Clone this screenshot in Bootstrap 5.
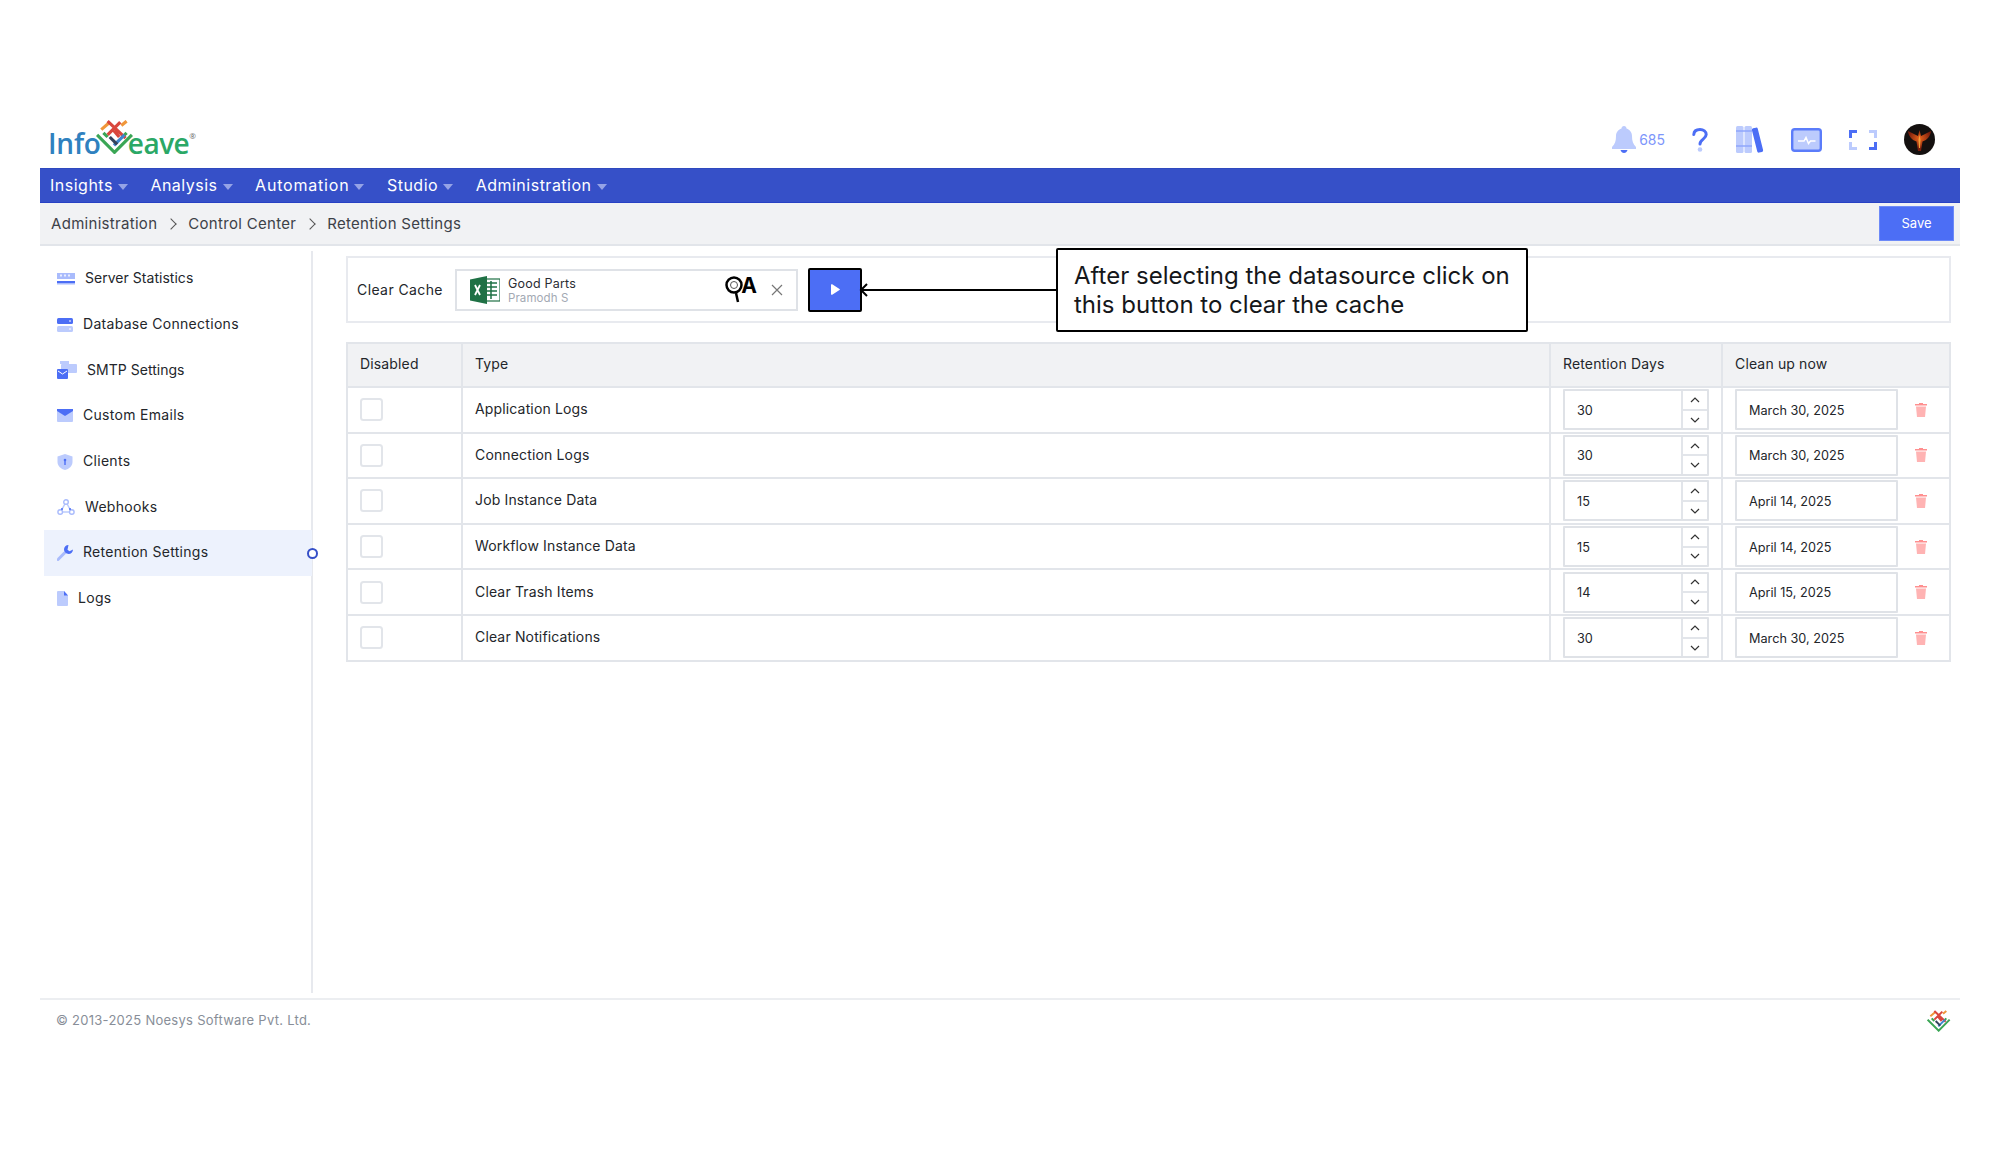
<!DOCTYPE html>
<html lang="en">
<head>
<meta charset="utf-8">
<title>Retention Settings</title>
<link href="https://cdn.jsdelivr.net/npm/bootstrap@5.3.0/dist/css/bootstrap.min.css" rel="stylesheet">
<style>
:root{--iw-blue:#4c6ef5;--iw-light:#bccbfd;--iw-line:#e2e5ea;--iw-head:#f1f2f4;}
body{font-family:Inter,"Liberation Sans",sans-serif;font-size:14px;color:#23262b;background:#fff;}
.page-wrap{padding:120px 40px 0;}
.brand-row{height:48px;}
.logo-box{padding:0 0 2px 8px;height:48px;}
.logo-text{font-family:"Open Sans",sans-serif;font-size:28px;font-weight:600;line-height:1;letter-spacing:-.2px;}
.logo-info{color:#2f81bf;}
.logo-eave{color:#2ba866;letter-spacing:-.5px;}
.logo-weave{width:38px;height:34px;margin:-12px -6px 0 -5px;}
.logo-reg{font-size:8px;color:#666;align-self:flex-start;margin-top:12px;font-weight:400;}
.top-tools{gap:27px;padding-right:25px;margin-bottom:9px;}
.tool-q{margin-right:1px;}
.bell-count{color:#7d96fb;font-size:14px;margin-left:3px;}
.avatar-mark{width:31px;height:31px;}
.main-nav{background:#3650c8;border-top:1px solid #2f49bf;border-bottom:1px solid #2741c4;height:35px;padding-left:10px;gap:22.5px;}
.main-nav .nav-link{color:#fff;font-size:16px;letter-spacing:.5px;padding:0 0 2px;}
.main-nav .nav-link.nav-wide{letter-spacing:.8px;}
.main-nav .dropdown-toggle::after{border-top-color:#95a3e6;border-width:6px 5px 0;margin-left:5px;vertical-align:1px;}
.crumb-bar{background:var(--iw-head);border-bottom:2px solid var(--iw-line);height:43px;padding:0 6px 0 11px;}
.crumb-bar .breadcrumb{margin:1px 0 0;font-size:15px;letter-spacing:.3px;}
.crumb-bar .breadcrumb-item,.crumb-bar .breadcrumb-item.active{color:#3d4148;}
.crumb-bar .breadcrumb-item+.breadcrumb-item{padding-left:0;}
.crumb-bar .breadcrumb-item+.breadcrumb-item::before{content:"";float:none;display:inline-block;width:8px;height:8px;padding:0;border-top:1px solid #555;border-right:1px solid #555;transform:rotate(45deg);margin:0 13px 1px 10px;}
.save-btn{background:var(--iw-blue);border:1px solid #6d8af8;border-radius:0;color:#fff;font-size:13px;width:75px;height:35px;padding:0;}
.body-row{height:752px;}
.side-col{width:273px;flex:none;margin-top:5px;height:742px;border-right:2px solid #e7e9ee;padding:5px 0 0 4px;}
.side-item{height:45.7px;padding:0 0 2px 13px;gap:10px;font-size:14px;letter-spacing:.3px;color:#23262b;position:relative;}
.side-item.side-tight{letter-spacing:.03px;}
.side-item svg{margin-top:2px;}
.side-item.current{background:#edf2fd;margin-right:-1px;}
.side-dot{position:absolute;right:-6px;top:18px;width:11px;height:11px;border:2px solid #3650c8;border-radius:50%;background:#fff;}
.content-col{padding:10px 10px 0 33px;}
.cache-card{height:67px;border:2px solid #e8eaef;border-radius:0;padding:0 0 0 9px;gap:10px;position:relative;}
.cache-label{font-size:14px;letter-spacing:.4px;color:#23262b;width:89px;white-space:nowrap;}
.source-box{width:343px;height:42px;border:2px solid #dfe2e7;padding:0 13px 0 13px;margin-left:-1px;}
.source-name{font-size:12.5px;line-height:14px;color:#2a2d33;margin-top:3px;letter-spacing:.2px;}
.source-owner{font-size:11.5px;line-height:14px;color:#a3a9b3;letter-spacing:.1px;}
.qa-mark{margin-right:14px;}
.qa-letter{font-size:21px;line-height:1;color:#000;margin-left:-2px;margin-top:-8px;}
.run-btn{width:54px;height:44px;border:2px solid #000;border-radius:2px;background:var(--iw-blue);padding:0;}
.run-btn:hover{background:var(--iw-blue);}
.note-box{position:absolute;right:421px;top:-10px;width:472px;height:84px;border:2px solid #000;border-radius:2px;background:#fff;font-size:24px;line-height:29px;color:#15171a;padding:11px 0 0 16px;white-space:nowrap;}
.note-line{position:absolute;left:-199px;top:33px;width:199px;height:14px;}
.rule-table{width:1603px;table-layout:fixed;margin:19px 0 0;border:2px solid var(--iw-line);border-collapse:collapse;}
.rule-table th,.rule-table td{border:2px solid var(--iw-line);padding:0 12px;vertical-align:middle;height:45.6px;font-size:14px;font-weight:400;color:#23262b;letter-spacing:.15px;}
.rule-table thead th{background:var(--iw-head);height:44px;padding-bottom:4px;}
.rule-table td.type-cell{padding-bottom:2px;}
.check-box{width:23px;height:23px;border:2px solid #e2e5ea;border-radius:2px;margin:0;display:block;}
.num-box{width:146px;height:41px;border:2px solid #dfe2e7;border-radius:1px;}
.num-box .form-control,.date-field{border:0;border-radius:0;font-size:12.7px;color:#23262b;box-shadow:none;height:100%;padding:1px 0 0 12px;background:transparent;}
.spin-col{width:26px;flex:none;border-left:2px solid #e2e5ea;}
.spin-part{flex:1;}
.spin-part+.spin-part{border-top:2px solid #e2e5ea;}
.date-box{width:163px;height:41px;border:2px solid #dfe2e7;border-radius:1px;}
.trash-mark{margin-left:17px;}
.foot-bar{border-top:2px solid #eceef1;height:44px;padding:0 9px 0 16px;color:#888e98;font-size:13px;letter-spacing:.27px;}
</style>
</head>
<body>
<svg width="0" height="0" class="position-absolute">
  <symbol id="weave" viewBox="0 0 36 32">
    <g fill="none" stroke-width="3" stroke-linecap="butt">
      <path d="M1 14 17.500 30.500 34 14" stroke="#3aa655"/>
      <path d="M7 12l4 4M29 12l-4 4" stroke="#3aa655"/>
      <path d="M5 9l8-7M24 5l5-4" stroke="#f0973a"/>
      <path d="M11 1l17 16M17 10l5 6M23 2 11 14" stroke="#d9473d"/>
      <path d="M17 24l10-10" stroke="#3f86cf"/>
      <path d="M13 16l7 7" stroke="#33435c"/>
    </g>
  </symbol>
</svg>
<div class="page-wrap">
  <header class="brand-row d-flex align-items-center justify-content-between">
    <div class="logo-box d-flex align-items-center logo-text">
      <span class="logo-info">Info</span>
      <svg class="logo-weave" aria-hidden="true"><use href="#weave"/></svg>
      <span class="logo-eave">eave</span>
      <span class="logo-reg">®</span>
    </div>
    <div class="top-tools d-flex align-items-center">
      <div class="d-flex align-items-center">
        <svg width="24" height="27" viewBox="0 0 24 27"><path fill="#bccbfd" d="M12 0c1.500 0 2.500 1 2.500 2.400C18 3.500 20 6.500 20 10c0 5 1 8 4 11v2H0v-2c3-3 4-6 4-11 0-3.500 2-6.500 5.500-7.600C9.500 1 10.500 0 12 0z"/><path fill="#4c6ef5" d="M8.500 24h7c-.5 2-2 3-3.500 3s-3-1-3.500-3z"/></svg>
        <span class="bell-count">685</span>
      </div>
      <svg class="tool-q" width="16" height="24" viewBox="0 0 16 24"><path fill="none" stroke="#4c6ef5" stroke-width="3" stroke-linecap="round" d="M1.800 6.500C2 3.500 4.500 1.600 8 1.600c3.500 0 6.200 2 6.200 5 0 4.500-6.200 4.500-6.200 9.400"/><circle cx="8" cy="21.500" r="2.300" fill="#bccbfd"/></svg>
      <svg width="28" height="28" viewBox="0 0 28 28"><rect x="0" y="0" width="7.500" height="27" rx="1.500" fill="#bccbfd"/><rect x="8.500" y="0" width="7.500" height="27" rx="1.500" fill="#bccbfd"/><path d="M0 5h16M0 20h16" stroke="#8ea6fb" stroke-width="1.500"/><g transform="rotate(-14 22 14)"><rect x="18.500" y="1.500" width="6" height="25" rx="1.500" fill="#4c6ef5"/></g></svg>
      <svg width="31" height="24" viewBox="0 0 31 24"><rect x="1.200" y="1.200" width="28.600" height="21.600" rx="2.500" fill="#bccbfd" stroke="#5b7cfa" stroke-width="2.400"/><path d="M7 13h6l2-3.500 2.500 6 2-2.500h5" fill="none" stroke="#fff" stroke-width="1.500"/></svg>
      <svg width="28" height="20" viewBox="0 0 28 20"><path fill="none" stroke="#4c6ef5" stroke-width="3" d="M1.500 8V1.500H8M26.500 12v6.500H20"/><path fill="none" stroke="#bccbfd" stroke-width="3" d="M20 1.500h6.500V8M8 18.500H1.500V12"/></svg>
      <svg class="avatar-mark" viewBox="0 0 31 31"><defs><clipPath id="avatarClip"><circle cx="15.500" cy="15.500" r="15.500"/></clipPath><radialGradient id="avatarGlow" cx=".5" cy=".4" r=".5"><stop offset="0" stop-color="#e8641c"/><stop offset="1" stop-color="#7a1d0c"/></radialGradient></defs><circle cx="15.500" cy="15.500" r="15.500" fill="#14100f"/><g clip-path="url(#avatarClip)"><path fill="url(#avatarGlow)" d="M15.500 6l-1.500 6-10-5c.5 5 3.500 9 8.500 10.500L14 27h3l1.500-9.500C23.500 16 26.500 12 27 7l-10 5z"/><path fill="#f2a13a" d="M15.500 10.500 14.500 16l.5 8h1l.5-8z"/></g></svg>
    </div>
  </header>

  <nav class="nav main-nav align-items-center">
    <a class="nav-link dropdown-toggle" href="#">Insights</a>
    <a class="nav-link dropdown-toggle" href="#">Analysis</a>
    <a class="nav-link nav-wide dropdown-toggle" href="#">Automation</a>
    <a class="nav-link dropdown-toggle" href="#">Studio</a>
    <a class="nav-link dropdown-toggle" href="#">Administration</a>
  </nav>

  <div class="crumb-bar d-flex align-items-center justify-content-between">
    <ol class="breadcrumb">
      <li class="breadcrumb-item">Administration</li>
      <li class="breadcrumb-item">Control Center</li>
      <li class="breadcrumb-item active">Retention Settings</li>
    </ol>
    <button class="btn save-btn" type="button">Save</button>
  </div>

  <div class="body-row d-flex">
    <aside class="side-col">
      <div class="side-item side-tight d-flex align-items-center">
        <svg width="18" height="12" viewBox="0 0 18 12"><rect y="0" width="18" height="6" fill="#a9bbfc"/><path d="M4 1.500v2M8 1.500v2M12 1.500v2" stroke="#fff" stroke-width="1.500"/><path d="M0 8h18v2H0z" fill="#4c6ef5"/><path d="M0 10h18v1.500H0z" fill="#a9bbfc"/></svg>
        <span>Server Statistics</span>
      </div>
      <div class="side-item d-flex align-items-center">
        <svg width="16" height="14" viewBox="0 0 16 14"><rect width="16" height="6" rx="1.500" fill="#4c6ef5"/><rect y="8" width="16" height="6" rx="1.500" fill="#bccbfd"/><path d="M12 3h2M12 11h2" stroke="#fff"/></svg>
        <span>Database Connections</span>
      </div>
      <div class="side-item side-tight d-flex align-items-center">
        <svg width="20" height="18" viewBox="0 0 20 18"><path d="M3 3V0h9v3z" fill="#bccbfd"/><rect x="4" y="3" width="16" height="9" rx="1" fill="#bccbfd"/><rect x="0" y="8" width="11" height="10" rx="1" fill="#4c6ef5"/><path d="M1 10l4.500 3L10 10" fill="none" stroke="#fff"/></svg>
        <span>SMTP Settings</span>
      </div>
      <div class="side-item d-flex align-items-center">
        <svg width="16" height="13" viewBox="0 0 16 13"><rect width="16" height="13" rx="1" fill="#bccbfd"/><path d="M0 0h16v2L8 7 0 2z" fill="#4c6ef5"/></svg>
        <span>Custom Emails</span>
      </div>
      <div class="side-item d-flex align-items-center">
        <svg width="16" height="16" viewBox="0 0 16 16"><path d="M8 0l7.500 2.500V8c0 4-3.500 7-7.500 8-4-1-7.500-4-7.500-8V2.500z" fill="#bccbfd"/><path d="M8 6v5" stroke="#4c6ef5" stroke-width="1.400"/><circle cx="8" cy="6" r="1.300" fill="#4c6ef5"/></svg>
        <span>Clients</span>
      </div>
      <div class="side-item d-flex align-items-center">
        <svg width="18" height="16" viewBox="0 0 18 16"><path d="M9 3 3.500 13h11z" fill="none" stroke="#bccbfd" stroke-width="1.500"/><circle cx="9" cy="3" r="2.300" fill="#fff" stroke="#a9bbfc" stroke-width="1.400"/><circle cx="3.200" cy="13" r="2.300" fill="#fff" stroke="#a9bbfc" stroke-width="1.400"/><circle cx="14.800" cy="13" r="2.300" fill="#fff" stroke="#a9bbfc" stroke-width="1.400"/><circle cx="5" cy="10" r="1" fill="#4c6ef5"/><circle cx="13" cy="10" r="1" fill="#4c6ef5"/></svg>
        <span>Webhooks</span>
      </div>
      <div class="side-item current d-flex align-items-center">
        <svg width="16" height="16" viewBox="0 0 16 16"><path d="M7.500 8 1 14.500" stroke="#a9bbfc" stroke-width="3" stroke-linecap="round"/><path d="M11.500 0c-2.500 0-4.500 2-4.500 4.300 0 2.700 2.300 4.700 4.700 4.700C14 9 16 7 16 4.500l-3.500 1.700-2-1.500L11.500 0z" fill="#4c6ef5"/></svg>
        <span>Retention Settings</span>
        <span class="side-dot"></span>
      </div>
      <div class="side-item d-flex align-items-center">
        <svg width="11" height="15" viewBox="0 0 11 15"><path d="M1 0h6l4 4.500V14a1 1 0 0 1-1 1H1a1 1 0 0 1-1-1V1a1 1 0 0 1 1-1z" fill="#bccbfd"/><path d="M7 0l4 4.500H7z" fill="#4c6ef5"/></svg>
        <span>Logs</span>
      </div>
    </aside>

    <main class="content-col flex-grow-1">
      <section class="cache-card d-flex align-items-center">
        <span class="cache-label">Clear Cache</span>
        <div class="source-box d-flex align-items-center">
          <svg width="30" height="28" viewBox="0 0 30 28"><rect x="12" y="3" width="18" height="22" fill="#fff" stroke="#1f7145" stroke-width="1.200"/><path d="M15 7h12M15 11h12M15 15h12M15 19h12M21 5v18" stroke="#1f7145" stroke-width="1.500"/><path d="M0 3.500 17 0v28L0 24.500z" fill="#1f7145"/><path d="M5 9l5 10M10 9 5 19" stroke="#fff" stroke-width="1.800"/></svg>
          <div class="ms-2 flex-grow-1">
            <div class="source-name">Good Parts</div>
            <div class="source-owner">Pramodh S</div>
          </div>
          <div class="d-flex align-items-center qa-mark">
            <svg width="18" height="29" viewBox="0 0 18 29"><circle cx="9" cy="10" r="7.500" fill="#fff" stroke="#000" stroke-width="2.500"/><circle cx="9" cy="10" r="3.500" fill="none" stroke="#555"/><path d="M11 18l2 9" stroke="#000" stroke-width="2.500"/></svg>
            <span class="fw-bold qa-letter">A</span>
          </div>
          <svg width="12" height="12" viewBox="0 0 12 12"><path d="M1 1l10 10M11 1 1 11" stroke="#777" stroke-width="1.200"/></svg>
        </div>
        <button class="btn run-btn d-flex align-items-center justify-content-center" type="button" aria-label="Run">
          <svg width="9" height="11" viewBox="0 0 9 11"><path d="M0 1v9a.800.800 0 0 0 1.200.7L8.500 6a.6.600 0 0 0 0-1L1.200.300A.800.800 0 0 0 0 1z" fill="#fff"/></svg>
        </button>
        <div class="note-box">
          <svg class="note-line" viewBox="0 0 199 14"><path d="M199 7H2M8 1 2 7l6 6" fill="none" stroke="#000" stroke-width="2"/></svg>
          After selecting the datasource click on<br>this button to clear the cache
        </div>
      </section>

      <table class="rule-table">
        <colgroup><col style="width:115px"><col style="width:1088px"><col style="width:172px"><col style="width:228px"></colgroup>
        <thead><tr><th>Disabled</th><th>Type</th><th>Retention Days</th><th>Clean up now</th></tr></thead>
        <tbody id="ruleRows">
          <tr><td><input class="check-box form-check-input" type="checkbox" aria-label="Disabled"></td><td class="type-cell">Application Logs</td>
            <td><div class="num-box d-flex"><input class="form-control" value="30" aria-label="Days"><div class="spin-col d-flex flex-column"><div class="spin-part d-flex align-items-center justify-content-center"><svg width="10" height="6" viewBox="0 0 10 6"><path d="M1 5l4-4 4 4" fill="none" stroke="#333" stroke-width="1.200"/></svg></div><div class="spin-part d-flex align-items-center justify-content-center"><svg width="10" height="6" viewBox="0 0 10 6"><path d="M1 1l4 4 4-4" fill="none" stroke="#333" stroke-width="1.200"/></svg></div></div></div></td>
            <td><div class="d-flex align-items-center"><div class="date-box"><input class="form-control date-field" value="March 30, 2025" aria-label="Date"></div><svg class="trash-mark" width="12" height="14" viewBox="0 0 12 14"><path d="M4 0h4v1h4v1.500H0V1h4z" fill="#ff8f8f"/><path d="M1 3.500h10L10 14H2z" fill="#ffb3b3"/></svg></div></td></tr>
          <tr><td><input class="check-box form-check-input" type="checkbox" aria-label="Disabled"></td><td class="type-cell">Connection Logs</td>
            <td><div class="num-box d-flex"><input class="form-control" value="30" aria-label="Days"><div class="spin-col d-flex flex-column"><div class="spin-part d-flex align-items-center justify-content-center"><svg width="10" height="6" viewBox="0 0 10 6"><path d="M1 5l4-4 4 4" fill="none" stroke="#333" stroke-width="1.200"/></svg></div><div class="spin-part d-flex align-items-center justify-content-center"><svg width="10" height="6" viewBox="0 0 10 6"><path d="M1 1l4 4 4-4" fill="none" stroke="#333" stroke-width="1.200"/></svg></div></div></div></td>
            <td><div class="d-flex align-items-center"><div class="date-box"><input class="form-control date-field" value="March 30, 2025" aria-label="Date"></div><svg class="trash-mark" width="12" height="14" viewBox="0 0 12 14"><path d="M4 0h4v1h4v1.500H0V1h4z" fill="#ff8f8f"/><path d="M1 3.500h10L10 14H2z" fill="#ffb3b3"/></svg></div></td></tr>
          <tr><td><input class="check-box form-check-input" type="checkbox" aria-label="Disabled"></td><td class="type-cell">Job Instance Data</td>
            <td><div class="num-box d-flex"><input class="form-control" value="15" aria-label="Days"><div class="spin-col d-flex flex-column"><div class="spin-part d-flex align-items-center justify-content-center"><svg width="10" height="6" viewBox="0 0 10 6"><path d="M1 5l4-4 4 4" fill="none" stroke="#333" stroke-width="1.200"/></svg></div><div class="spin-part d-flex align-items-center justify-content-center"><svg width="10" height="6" viewBox="0 0 10 6"><path d="M1 1l4 4 4-4" fill="none" stroke="#333" stroke-width="1.200"/></svg></div></div></div></td>
            <td><div class="d-flex align-items-center"><div class="date-box"><input class="form-control date-field" value="April 14, 2025" aria-label="Date"></div><svg class="trash-mark" width="12" height="14" viewBox="0 0 12 14"><path d="M4 0h4v1h4v1.500H0V1h4z" fill="#ff8f8f"/><path d="M1 3.500h10L10 14H2z" fill="#ffb3b3"/></svg></div></td></tr>
          <tr><td><input class="check-box form-check-input" type="checkbox" aria-label="Disabled"></td><td class="type-cell">Workflow Instance Data</td>
            <td><div class="num-box d-flex"><input class="form-control" value="15" aria-label="Days"><div class="spin-col d-flex flex-column"><div class="spin-part d-flex align-items-center justify-content-center"><svg width="10" height="6" viewBox="0 0 10 6"><path d="M1 5l4-4 4 4" fill="none" stroke="#333" stroke-width="1.200"/></svg></div><div class="spin-part d-flex align-items-center justify-content-center"><svg width="10" height="6" viewBox="0 0 10 6"><path d="M1 1l4 4 4-4" fill="none" stroke="#333" stroke-width="1.200"/></svg></div></div></div></td>
            <td><div class="d-flex align-items-center"><div class="date-box"><input class="form-control date-field" value="April 14, 2025" aria-label="Date"></div><svg class="trash-mark" width="12" height="14" viewBox="0 0 12 14"><path d="M4 0h4v1h4v1.500H0V1h4z" fill="#ff8f8f"/><path d="M1 3.500h10L10 14H2z" fill="#ffb3b3"/></svg></div></td></tr>
          <tr><td><input class="check-box form-check-input" type="checkbox" aria-label="Disabled"></td><td class="type-cell">Clear Trash Items</td>
            <td><div class="num-box d-flex"><input class="form-control" value="14" aria-label="Days"><div class="spin-col d-flex flex-column"><div class="spin-part d-flex align-items-center justify-content-center"><svg width="10" height="6" viewBox="0 0 10 6"><path d="M1 5l4-4 4 4" fill="none" stroke="#333" stroke-width="1.200"/></svg></div><div class="spin-part d-flex align-items-center justify-content-center"><svg width="10" height="6" viewBox="0 0 10 6"><path d="M1 1l4 4 4-4" fill="none" stroke="#333" stroke-width="1.200"/></svg></div></div></div></td>
            <td><div class="d-flex align-items-center"><div class="date-box"><input class="form-control date-field" value="April 15, 2025" aria-label="Date"></div><svg class="trash-mark" width="12" height="14" viewBox="0 0 12 14"><path d="M4 0h4v1h4v1.500H0V1h4z" fill="#ff8f8f"/><path d="M1 3.500h10L10 14H2z" fill="#ffb3b3"/></svg></div></td></tr>
          <tr><td><input class="check-box form-check-input" type="checkbox" aria-label="Disabled"></td><td class="type-cell">Clear Notifications</td>
            <td><div class="num-box d-flex"><input class="form-control" value="30" aria-label="Days"><div class="spin-col d-flex flex-column"><div class="spin-part d-flex align-items-center justify-content-center"><svg width="10" height="6" viewBox="0 0 10 6"><path d="M1 5l4-4 4 4" fill="none" stroke="#333" stroke-width="1.200"/></svg></div><div class="spin-part d-flex align-items-center justify-content-center"><svg width="10" height="6" viewBox="0 0 10 6"><path d="M1 1l4 4 4-4" fill="none" stroke="#333" stroke-width="1.200"/></svg></div></div></div></td>
            <td><div class="d-flex align-items-center"><div class="date-box"><input class="form-control date-field" value="March 30, 2025" aria-label="Date"></div><svg class="trash-mark" width="12" height="14" viewBox="0 0 12 14"><path d="M4 0h4v1h4v1.500H0V1h4z" fill="#ff8f8f"/><path d="M1 3.500h10L10 14H2z" fill="#ffb3b3"/></svg></div></td></tr>
        </tbody>
      </table>
    </main>
  </div>

  <footer class="foot-bar d-flex align-items-center justify-content-between">
    <span>© 2013-2025 Noesys Software Pvt. Ltd.</span>
    <svg width="24" height="22" aria-hidden="true"><use href="#weave"/></svg>
  </footer>
</div>
<script src="https://cdn.jsdelivr.net/npm/bootstrap@5.3.0/dist/js/bootstrap.bundle.min.js"></script>
</body>
</html>
